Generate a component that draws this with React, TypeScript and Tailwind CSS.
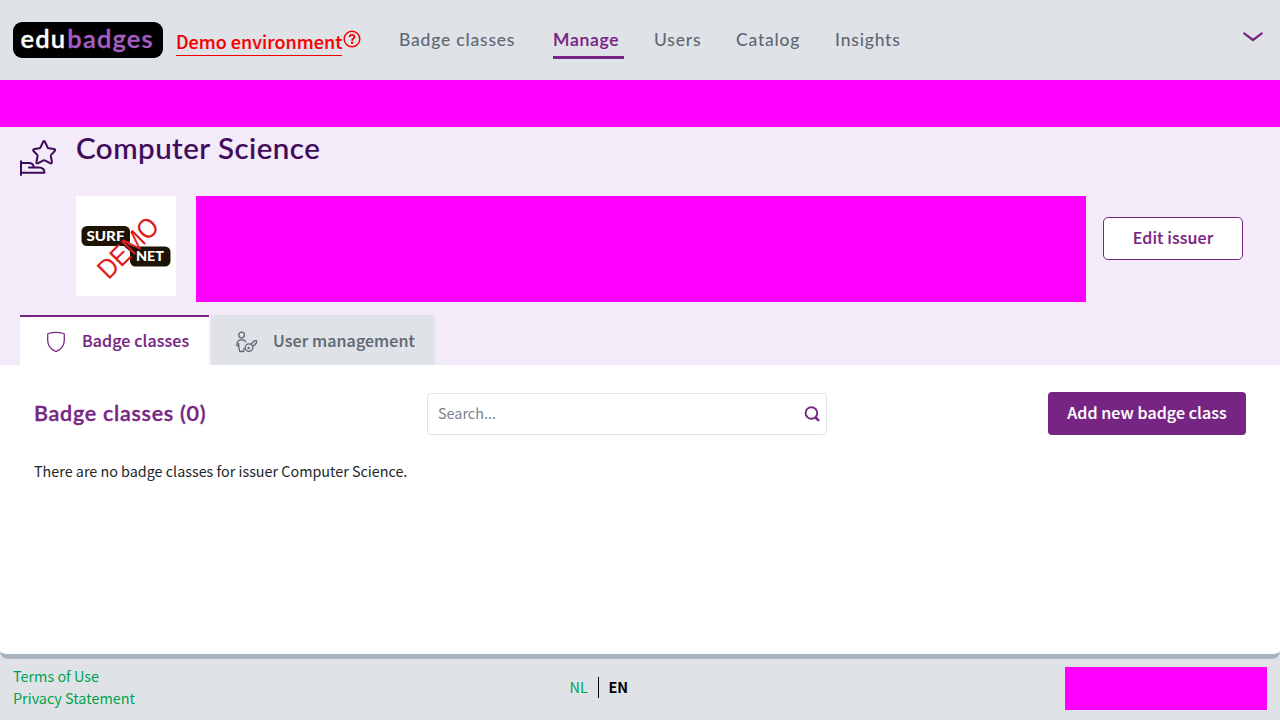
import React from "react";

const sans = "font-['Noto_Sans_CJK_SC','Noto_Sans',sans-serif]";
const display = "font-['Lato','Open_Sans',sans-serif]";
const semibold = "font-medium [-webkit-text-stroke:0.15px_currentColor]";

function NavItem({ label, width, active = false }: { label: string; width: string; active?: boolean }) {
  return (
    <a
      className={`${width} ${display} block h-[31px] shrink-0 whitespace-nowrap border-b-[3px] text-[17.5px] leading-[24px] ${
        active ? "border-[#772583] font-semibold tracking-[0.75px] text-[#772583] [-webkit-text-stroke:0.15px_currentColor]" : "border-transparent font-medium tracking-[0.8px] text-[#5e6873]"
      }`}
    >
      {label}
    </a>
  );
}

function HelpIcon() {
  return (
    <svg width="18" height="18" viewBox="0 0 18 18" fill="none" stroke="#f50000" strokeWidth="1.5">
      <circle cx="9" cy="9" r="7.8" />
      <path d="M6.7 7.1C6.7 4.1 11.4 4.2 11.4 6.8C11.4 8.6 9.1 8.4 9.1 10.7" strokeWidth="1.9" />
      <circle cx="9.1" cy="12.8" r="0.5" />
    </svg>
  );
}

function IssuerIcon() {
  return (
    <svg width="38" height="38" viewBox="0 0 38 38" fill="none" stroke="#3f0a5a" strokeWidth="2" strokeLinejoin="round" strokeLinecap="round">
      <path d="M23.2 1.8Q24 .2 24.9 1.8L27.6 7.4Q28 8.1 28.8 8.2L33.8 8.9Q36.2 9.4 34.6 11.2L31.2 14.9Q30.7 15.4 30.8 16L31.9 21.7Q32 24.1 30 23.2L24.8 20.4Q24.1 20.1 23.5 20.4L18.2 23.2Q16 23.9 16.5 21.7L17.6 16Q17.7 15.3 17.2 14.8L13.7 11.3Q12.3 9.4 14.7 8.9L19.4 8.2Q20.2 8.1 20.5 7.4Z" />
      <path d="M1 21.2V35M1 23H9Q13 23.2 13.7 26.5M1 32.7H24.4Q24.7 27.6 18.6 27.6H9" />
    </svg>
  );
}

function IssuerLogo() {
  return (
    <svg className="shrink-0 bg-white" width="100" height="100" viewBox="0 0 100 100">
      <rect x="5.5" y="30" width="48.5" height="20" rx="5.5" fill="#1e1405" />
      <rect x="54" y="50.5" width="40.5" height="20" rx="5.5" fill="#1e1405" />
      <g className="font-['Lato',sans-serif] font-black" fill="#fff" fontSize="12.8">
        <text x="10.5" y="44.8" textLength="38" lengthAdjust="spacingAndGlyphs">SURF</text>
        <text x="60" y="65" textLength="28" lengthAdjust="spacingAndGlyphs">NET</text>
      </g>
      <path d="M44 46L54 49L64 53L57 58L49 51Z" fill="#1e1405" />
      <text
        className="font-['Liberation_Sans',sans-serif]"
        transform="translate(32.5 84.5) rotate(-45)"
        fontSize="27.5"
        textLength="74"
        lengthAdjust="spacingAndGlyphs"
        fill="#e01b1b"
      >
        DEMO
      </text>
    </svg>
  );
}

function ShieldIcon() {
  return (
    <svg width="20" height="22" viewBox="0 0 20 22" fill="none" stroke="#772583" strokeWidth="1.3" strokeLinejoin="round">
      <path d="M1.7 3.3Q1.7 2.7 2.4 2.5Q10 .1 17.6 2.5Q18.3 2.7 18.3 3.3V9.5Q18 17 10.7 20.2Q10 20.6 9.3 20.2Q2 17 1.7 9.5Z" />
    </svg>
  );
}

function UserKeyIcon() {
  return (
    <svg width="22" height="22" viewBox="0 0 22 22" fill="none" stroke="#5e6873" strokeWidth="1.3" strokeLinejoin="round" strokeLinecap="round">
      <circle cx="5.6" cy="4" r="2.8" />
      <path d="M9.8 10.8Q8.8 8.6 5.6 8.6Q.8 8.8 .8 14.3L2.7 15.2L3.7 20.5H7.6L8 17.5M2.7 15.2V12.5" />
      <circle cx="13" cy="16.6" r="3.8" />
      <circle cx="12.6" cy="17" r=".6" />
      <path d="M14.8 13.2L18.4 9.7H20.5V12.1L19.2 12.4V13.8L17.7 14.1L16.6 15.3" />
    </svg>
  );
}

export default function App() {
  return (
    <div className={`${sans} flex h-[720px] w-[1280px] flex-col overflow-hidden bg-[#dfe3e8] text-[#212529]`}>
      <header className="flex h-20 shrink-0 items-start pl-[13px] pr-[17px]">
        <div className={`${display} mt-[22px] flex h-9 w-[150px] shrink-0 items-center whitespace-nowrap rounded-[9px] bg-black pb-[4px] pl-[7.5px] text-[25.5px] font-semibold leading-8 tracking-[1.2px] text-white [-webkit-text-stroke:0.35px_currentColor]`}>
          edu<span className="ml-px text-[#a45fc0]">badges</span>
        </div>
        <div className="ml-[13px] mt-[27px] flex w-[223px] shrink-0 items-start">
          <a className={`${semibold} h-[29px] w-[166px] whitespace-nowrap border-b border-[#f50000] text-[18px] leading-[28px] text-[#f50000]`}>Demo environment</a>
          <span className="mt-[3px] ml-px"><HelpIcon /></span>
        </div>
        <nav className="mt-[28px] flex flex-1">
          <NavItem label="Badge classes" width="mr-[34px] w-[120px]" />
          <NavItem label="Manage" width="mr-[30px] w-[71px]" active />
          <NavItem label="Users" width="mr-[35px] w-[47px]" />
          <NavItem label="Catalog" width="mr-[35px] w-[64px]" />
          <NavItem label="Insights" width="w-[66px]" />
        </nav>
        <svg className="mt-[31px]" width="20" height="12" viewBox="0 0 20 12" fill="none" stroke="#772583" strokeWidth="2.2" strokeLinecap="round" strokeLinejoin="round">
          <path d="M1.2 2.3L10 9L18.8 2.3" />
        </svg>
      </header>

      <div className="h-[47px] shrink-0 bg-[#ff00ff]" />

      <section className="flex h-[238px] shrink-0 flex-col bg-[#f4ebfa] px-5">
        <div className="flex h-[69px] items-start">
          <div className="mt-[13px] w-14"><IssuerIcon /></div>
          <h1 className={`${display} mt-px whitespace-nowrap text-[29.5px] font-medium leading-10 tracking-[0.5px] text-[#3f0a5a] [-webkit-text-stroke:0.2px_currentColor]`}>Computer Science</h1>
        </div>
        <div className="flex h-[119px] items-start pl-14">
          <IssuerLogo />
          <div className="ml-5 h-[106px] w-[890px] bg-[#ff00ff]" />
          <button className={`${semibold} ml-[17px] mt-[21px] h-[43px] w-[140px] rounded-[5px] border border-[#772583] bg-white pb-[3px] text-[16px] leading-6 tracking-[0.1px] text-[#772583]`}>Edit issuer</button>
        </div>
        <div className="flex h-[50px] gap-[2px]">
          <div className={`${semibold} flex w-[189px] items-center border-t-2 border-[#772583] bg-white pl-[26px] text-[16px] tracking-[0.1px] text-[#772583]`}>
            <span className="mt-[2px]"><ShieldIcon /></span>
            <span className="mb-[2px] ml-4 whitespace-nowrap leading-6">Badge classes</span>
          </div>
          <div className={`${semibold} flex w-[224px] items-center border-t-2 border-[#dfe3e8] bg-[#dfe3e8] pl-[25px] text-[16px] tracking-[0.1px] text-[#5e6873]`}>
            <span className="mt-[2px]"><UserKeyIcon /></span>
            <span className="mb-[2px] ml-[15px] whitespace-nowrap leading-6">User management</span>
          </div>
        </div>
      </section>

      <main className="h-[294px] shrink-0 rounded-b-[8px] border-b-[5px] border-[#a9b3bd] bg-white px-[34px] pt-[27px]">
        <div className="flex h-[43px] items-center">
          <h2 className={`${display} w-[393px] whitespace-nowrap pb-[2px] text-[21.5px] font-semibold leading-7 tracking-[0.72px] text-[#772583] [-webkit-text-stroke:0.35px_currentColor]`}>Badge classes (0)</h2>
          <div className="mt-px flex h-[42px] w-[400px] items-center justify-between rounded-[4px] border border-[#dfe3e8] pl-[10px] pr-[6px]">
            <span className="pb-[2px] text-[14.4px] leading-6 text-[#79838d]">Search...</span>
            <svg width="16" height="16" viewBox="0 0 16 16" fill="none" stroke="#772583" strokeWidth="1.9">
              <circle cx="7.4" cy="7" r="5.8" />
              <path d="M11.2 11L15 14.8" strokeWidth="2.5" />
            </svg>
          </div>
          <button className={`${semibold} ml-auto h-[43px] w-[198px] rounded-[4px] bg-[#772583] pb-[3px] text-[16px] leading-6 tracking-[0.08px] text-white`}>Add new badge class</button>
        </div>
        <p className="mt-[24px] whitespace-nowrap text-[14.35px] leading-6">There are no badge classes for issuer Computer Science.</p>
      </main>

      <footer className="flex h-[61px] shrink-0 items-start justify-between pl-[13px] pr-[13px] text-[14.4px]">
        <div className="mt-[6px] flex w-[546px] flex-col leading-[22px] text-[#00a24e]">
          <a>Terms of Use</a>
          <a>Privacy Statement</a>
        </div>
        <div className="mt-[17px] flex flex-1 leading-[22px]">
          <a className="ml-[10.5px] w-[28.5px] text-[#00a24e]">NL</a>
          <span className="mt-px w-px bg-black" />
          <a className="ml-[9.5px] font-bold text-black">EN</a>
        </div>
        <div className="mt-2 h-[43px] w-[202px] bg-[#ff00ff]" />
      </footer>
    </div>
  );
}
